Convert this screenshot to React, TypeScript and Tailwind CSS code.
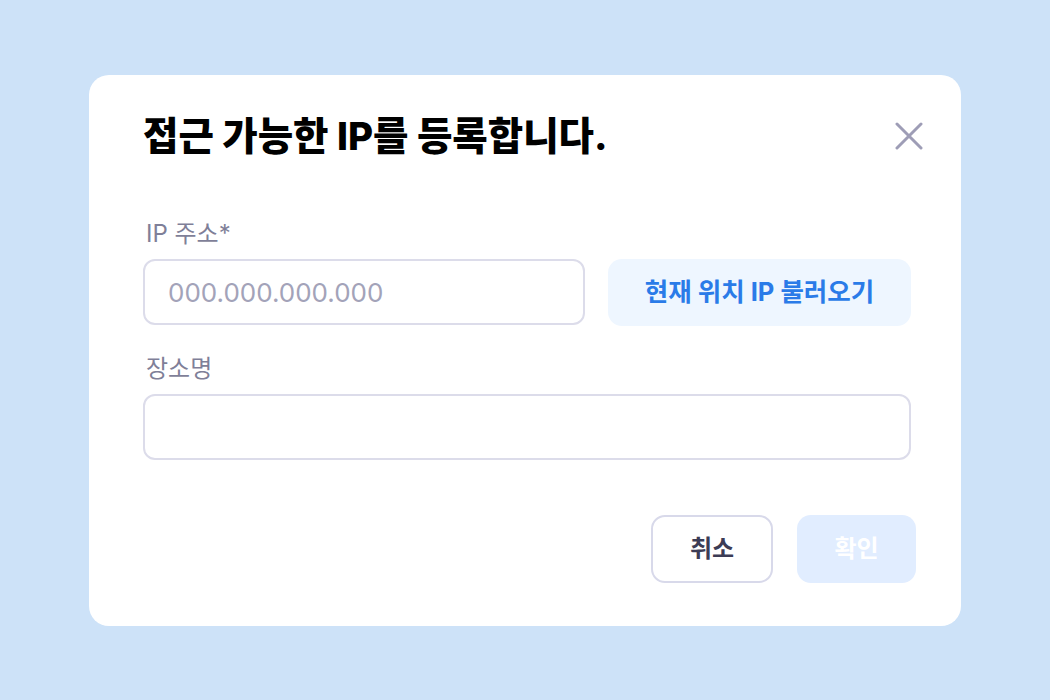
import React from "react";

export default function App() {
  const font = { fontFamily: "Inter, 'Noto Sans CJK KR', sans-serif" };
  return (
    <div
      className="flex h-[700px] w-full items-center justify-center bg-[#cde2f8]"
      style={font}
    >
      <div className="flex w-[872px] flex-col rounded-[20px] bg-white pb-[43px] pl-[54px] pr-[38px] pt-[36px]">
        <div className="flex items-center justify-between">
          <h1 className="text-[38.5px] font-extrabold leading-[50px] text-black">
            접근 가능한 IP를 등록합니다.
          </h1>
          <button className="flex h-[28px] w-[28px] items-center justify-center">
            <svg width="28" height="28" viewBox="0 0 28 28" fill="none">
              <path
                d="M2 2L26 26M26 2L2 26"
                stroke="#9e9db6"
                strokeWidth="3"
                strokeLinecap="round"
              />
            </svg>
          </button>
        </div>

        <div className="mt-[58px] flex flex-col pr-[12px]">
          <label className="pl-[3px] text-[24px] leading-[30px] text-[#7f7f98]">
            IP 주소*
          </label>
          <div className="mt-[10px] flex items-center gap-[23px]">
            <input
              className="h-[66px] min-w-0 flex-1 rounded-[12px] border-2 border-[#dcdcea] px-[23px] text-[26px] text-[#333] outline-none placeholder:text-[#a3a3b9]"
              placeholder="000.000.000.000"
              style={font}
            />
            <button className="h-[67px] w-[303px] shrink-0 rounded-[14px] bg-[#eef6ff] text-[25.5px] font-bold text-[#2a7be8]">
              현재 위치 IP 불러오기
            </button>
          </div>

          <label className="mt-[28px] pl-[3px] text-[24px] leading-[30px] text-[#7f7f98]">
            장소명
          </label>
          <input
            className="mt-[10px] h-[66px] w-full rounded-[12px] border-2 border-[#dcdcea] px-[23px] text-[26px] text-[#333] outline-none"
            style={font}
          />
        </div>

        <div className="mt-[55px] flex justify-end gap-[24px] pr-[7px]">
          <button className="h-[68px] w-[122px] rounded-[14px] border-2 border-[#d8d9ea] bg-white text-[24px] font-bold text-[#3c3c55]">
            취소
          </button>
          <button className="h-[68px] w-[119px] rounded-[14px] bg-[#e1edff] text-[24px] font-bold text-white">
            확인
          </button>
        </div>
      </div>
    </div>
  );
}
